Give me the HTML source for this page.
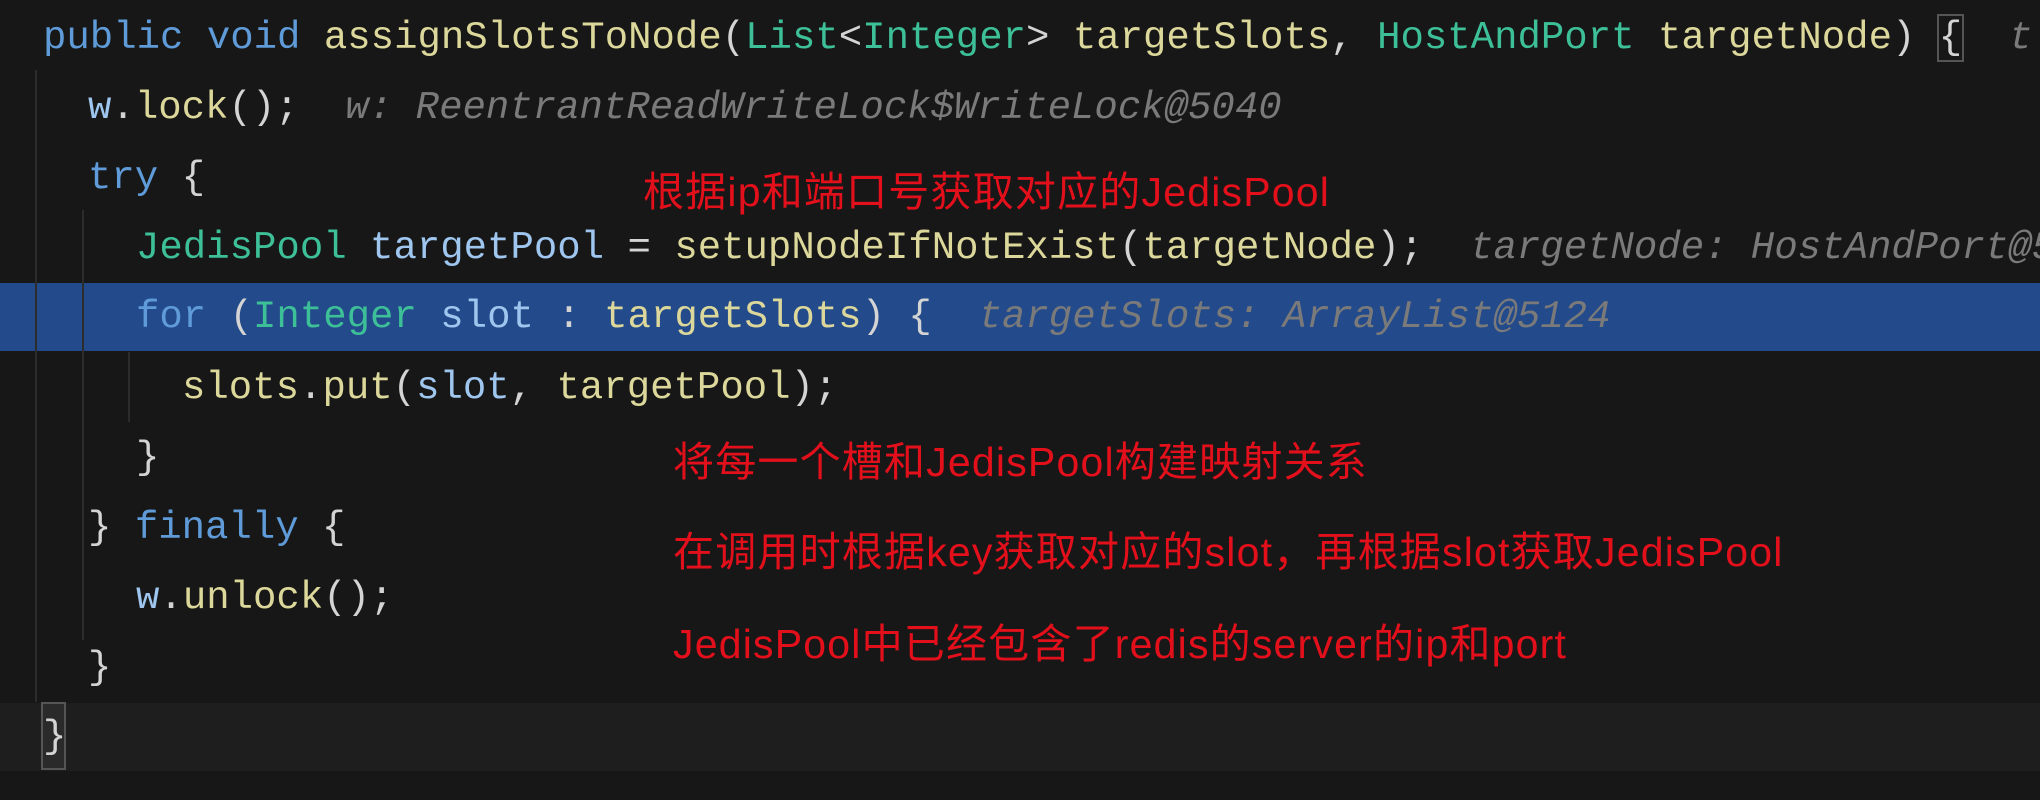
<!DOCTYPE html><html><head><meta charset="utf-8"><style>
body{margin:0;width:2040px;height:800px;background:#171717;overflow:hidden;position:relative;font-family:"Liberation Mono",monospace;}
.r{position:absolute;left:0;width:2040px;height:70px;line-height:70px;font-size:39px;color:#d4d4d4;white-space:pre;overflow:hidden}
.k{color:#5f9bd8}.m{color:#dcd79a}.t{color:#3dbf98}.h{color:#7a7a7a;font-style:italic}.p{color:#9fc6ee}
.g{position:absolute;width:2px;background:#2c2c2c}
.red{position:absolute;color:#e3101c;font-family:"Liberation Sans","Noto Sans CJK SC",sans-serif;font-size:41px;letter-spacing:1.2px;white-space:nowrap;line-height:44px}
</style></head><body>
<div class="r" style="top:3px;left:43px"><span class="k">public void </span><span class="m">assignSlotsToNode</span>(<span class="t">List</span>&lt;<span class="t">Integer</span>&gt; <span class="m">targetSlots</span>, <span class="t">HostAndPort</span> <span class="m">targetNode</span>) <span style="outline:2px solid #555;outline-offset:0">{</span>  <span class="h">t</span></div>
<div class="r" style="top:73px;left:88px"><span class="p">w</span>.<span class="m">lock</span>();  <span class="h">w: ReentrantReadWriteLock$WriteLock@5040</span></div>
<div class="r" style="top:143px;left:88px"><span class="k">try</span> {</div>
<div class="r" style="top:213px;left:136px"><span class="t">JedisPool</span> <span class="p">targetPool</span> = <span class="m">setupNodeIfNotExist</span>(<span class="m">targetNode</span>);  <span class="h">targetNode: HostAndPort@5</span></div>
<div style="position:absolute;top:283px;left:0;width:2040px;height:68px;background:#234a8a"></div>
<div class="r" style="top:282px;left:136px"><span class="k">for</span> (<span class="t">Integer</span> <span class="p">slot</span> : <span class="m">targetSlots</span>) {  <span class="h">targetSlots: ArrayList@5124</span></div>
<div class="r" style="top:353px;left:182px"><span class="m">slots</span>.<span class="m">put</span>(<span class="p">slot</span>, <span class="m">targetPool</span>);</div>
<div class="r" style="top:423px;left:136px">}</div>
<div class="r" style="top:493px;left:88px">} <span class="k">finally</span> {</div>
<div class="r" style="top:563px;left:136px"><span class="p">w</span>.<span class="m">unlock</span>();</div>
<div class="r" style="top:633px;left:88px">}</div>
<div style="position:absolute;top:703px;left:0;width:2040px;height:68px;background:#1e1e1e"></div>
<div style="position:absolute;top:702px;left:41px;width:25px;height:68px;border:2px solid #555;background:#2a2a2a;box-sizing:border-box"></div>
<div class="r" style="top:702px;left:43px">}</div>
<div class="g" style="left:35px;top:70px;height:632px"></div>
<div class="g" style="left:82px;top:210px;height:430px"></div>
<div class="g" style="left:128px;top:352px;height:70px"></div>
<div class="red" style="left:643px;top:170px">根据ip和端口号获取对应的JedisPool</div>
<div class="red" style="left:673px;top:440px">将每一个槽和JedisPool构建映射关系</div>
<div class="red" style="left:673px;top:530px">在调用时根据key获取对应的slot，再根据slot获取JedisPool</div>
<div class="red" style="left:673px;top:622px">JedisPool中已经包含了redis的server的ip和port</div>
</body></html>
